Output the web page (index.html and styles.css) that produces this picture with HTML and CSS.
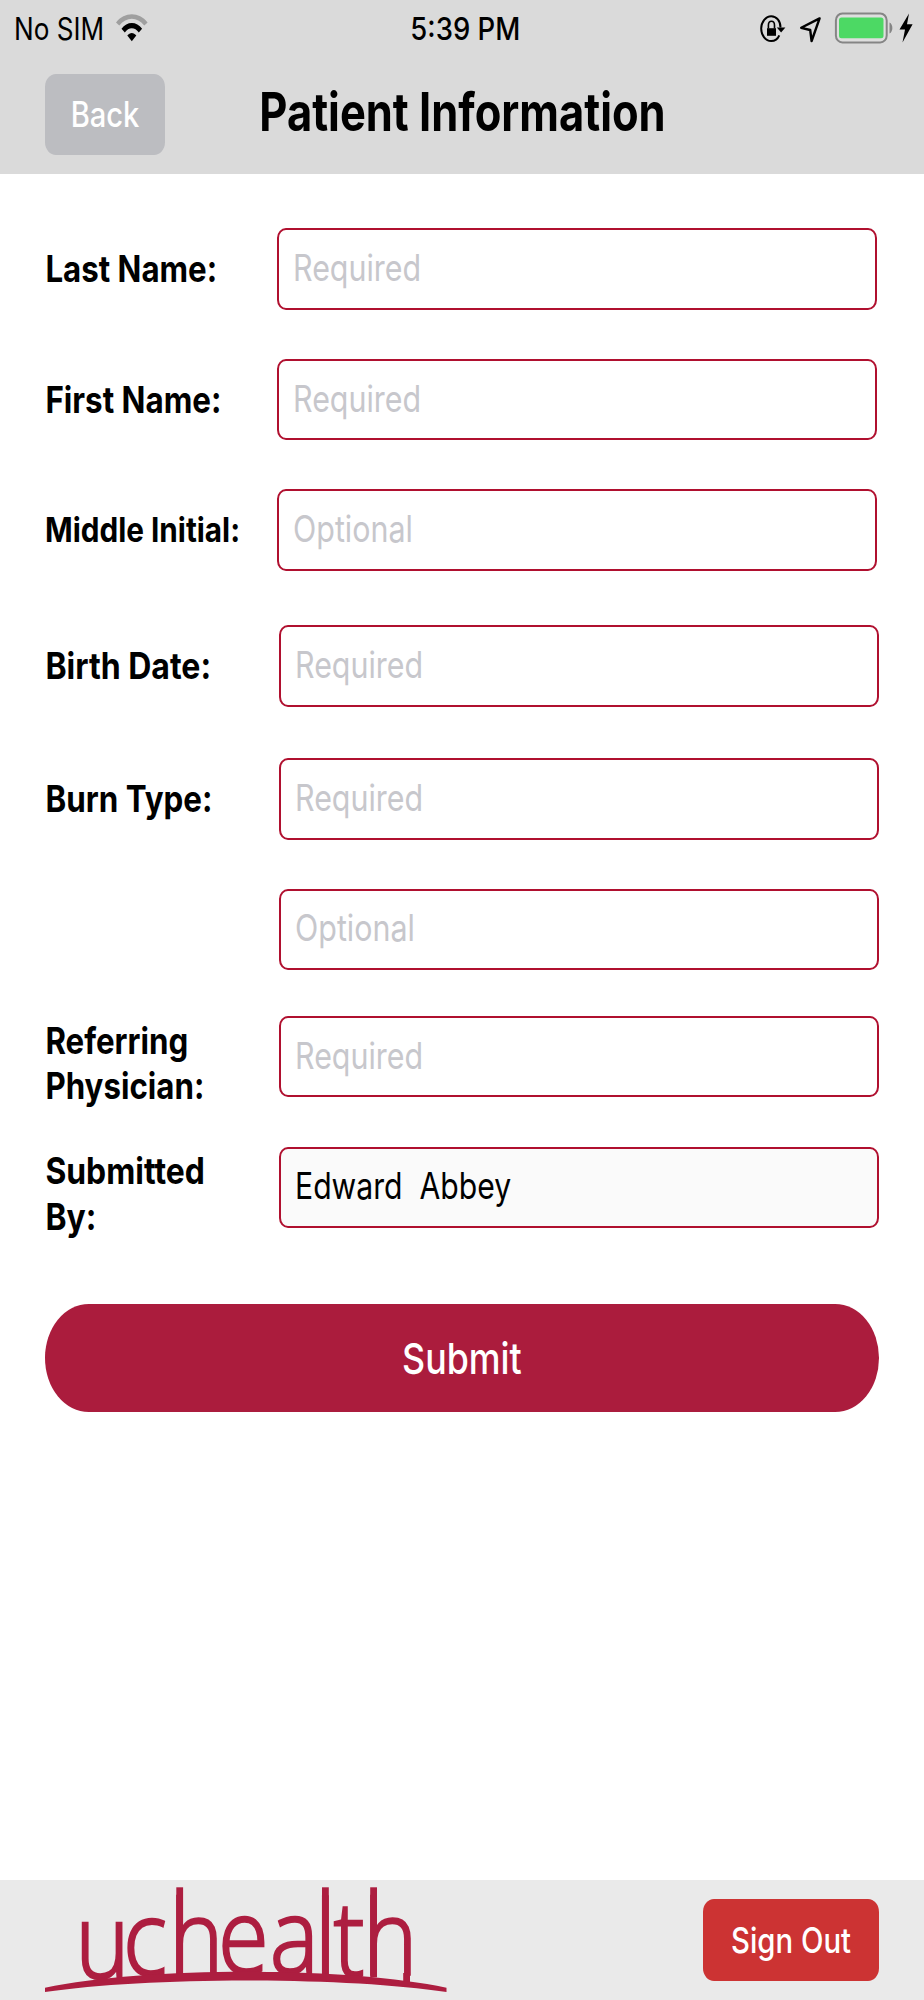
FILE: index.html
```html
<!DOCTYPE html>
<html lang="en">
<head>
<meta charset="utf-8">
<title>Patient Information</title>
<link rel="stylesheet" href="styles.css">
</head>
<body>
<div class="screen">
  <header class="top">
    <div class="status">
      <div class="status-left">
        <span class="carrier">No SIM</span>
        <svg class="wifi" width="32" height="28" viewBox="0 0 32 28">
          <path fill="#9f9f9f" d="M0 8.400C8.600-2.400 23-2.400 31.600 8.400L28.300 11.600C21 2.600 10.600 2.600 3.300 11.600Z"/>
          <path d="M5.500 14.800C11 7 20.600 7 26.100 14.800L22.800 18.500C19 12.700 12.600 12.700 8.800 18.500Z"/>
          <path d="M11.300 21.500C14 18 17.600 18 20.300 21.500L15.800 27.300Z"/>
        </svg>
      </div>
      <span class="time">5:39 PM</span>
      <div class="status-right">
        <svg width="26" height="28" viewBox="0 0 26 28">
          <path d="M20.500 12.500C20.500 6 16.500 1.200 11.200 1.200S1.200 7 1.200 13.600S5.600 26 11.200 26C14.800 26 17.700 24 19.300 20.300" fill="none" stroke="#000" stroke-width="2"/>
          <path d="M16.800 12.500H25.400L21.100 17.600Z"/>
          <path d="M7 13.200H16V20.800H7Z"/>
          <path d="M8.400 13.500V10.200C8.400 4.900 14.500 4.900 14.500 10.200V13.500" fill="none" stroke="#000" stroke-width="1.600"/>
        </svg>
        <svg class="location" width="23" height="28" viewBox="0 0 23 28">
          <path d="M20.600 3.400L2.200 12.800L11.200 15L12.600 26Z" fill="none" stroke="#000" stroke-width="2.400" stroke-linejoin="round"/>
        </svg>
        <svg class="battery" width="59" height="32" viewBox="0 0 59 32">
          <rect x="1.900" y="1.400" width="50.800" height="29" rx="6.500" ry="7" fill="#dedede" stroke="#858585" stroke-width="2"/>
          <rect x="5" y="5.600" width="44.500" height="20.600" rx="2.500" fill="#4cd964"/>
          <path d="M55.500 10.500C59.300 12 59.300 20 55.500 21.500Z" fill="#858585"/>
        </svg>
        <svg class="bolt" width="14" height="32" viewBox="0 0 14 32">
          <path d="M10 1.500L.5 17.600H6L3.500 30.500L13.600 12.200H8Z"/>
        </svg>
      </div>
    </div>
    <div class="titlebar">
      <button class="back"><span>Back</span></button>
      <h1>Patient Information</h1>
    </div>
  </header>

  <main class="form">
    <div class="row"><label class="w-last">Last Name:</label><div class="field"><span>Required</span></div></div>
    <div class="row"><label class="w-first">First Name:</label><div class="field"><span>Required</span></div></div>
    <div class="row"><label class="w-middle">Middle Initial:</label><div class="field"><span>Optional</span></div></div>
    <div class="row inset birth"><label class="w-birth">Birth Date:</label><div class="field"><span>Required</span></div></div>
    <div class="row inset"><label class="w-first">Burn Type:</label><div class="field"><span>Required</span></div></div>
    <div class="row inset"><label></label><div class="field"><span>Optional</span></div></div>
    <div class="row inset referring"><label class="two-line w-last">Referring<br>Physician:</label><div class="field"><span>Required</span></div></div>
    <div class="row inset"><label class="two-line w-submitted">Submitted<br>By:</label><div class="field filled"><span>Edward&nbsp; Abbey</span></div></div>
    <button class="submit"><span>Submit</span></button>
  </main>

  <footer class="bottom">
    <svg class="logo" width="402" height="120" viewBox="45 1880 402 120">
      <g fill="#ad1e40">
        <text class="wordmark" transform="scale(.88 1)" x="85.700 140 192.200 248 306.800 358 379.300 412.700" y="1978 1975 1975 1973.500 1973.500 1975 1976 1975">uchealth</text>
        <rect x="176.300" y="1887.300" width="6.800" height="88"/>
        <rect x="322" y="1887.300" width="6.800" height="88"/>
        <rect x="370.200" y="1887.300" width="6.800" height="90"/>
        <rect x="403.200" y="1973" width="6.800" height="10"/>
        <path d="M45 1987.700C147 1966.500 345 1966.500 446.500 1987.700V1992C345 1976.500 147 1976.500 45 1992Z"/>
      </g>
    </svg>
    <button class="signout"><span>Sign Out</span></button>
  </footer>
</div>
</body>
</html>
```

FILE: styles.css
```css
* { box-sizing: border-box; }
body { margin: 0; background: #fff; }
.screen {
  width: 924px;
  height: 2000px;
  display: flex;
  flex-direction: column;
  font-family: Inter, "Liberation Sans", sans-serif;
  color: #000;
}
button { border: 0; padding: 0; font-family: inherit; display: flex; align-items: center; justify-content: center; }
span, label { white-space: nowrap; }

.top { height: 173.7px; flex: none; background: #dadada; }
.status { height: 57px; display: grid; grid-template-columns: 1fr 124px 1fr; align-items: center; }
.status-left { display: flex; align-items: center; padding-left: 13.8px; }
.carrier { width: 102.200px; font-size: 31px; transform: scaleX(.843); transform-origin: left; }
.wifi { position: relative; top: -1px; }
.time { font-size: 31px; font-weight: 500; transform: translateX(3.300px) scaleX(.887); }
.status-right { display: flex; align-items: center; justify-content: flex-end; padding-right: 11px; }
.location { margin-left: 13px; }
.battery { margin-left: 12px; position: relative; top: -1px; }
.bolt { margin-left: 6px; position: relative; top: -1px; }

.titlebar { position: relative; height: 116.700px; padding: 16.500px 45px 0; }
.back { width: 120px; height: 81.500px; border-radius: 11px / 13px; background: #bcbdc1; color: #fff; font-size: 35px; font-weight: 500; }
.back span { transform: translateX(-.3px) scaleX(.832); }
h1 {
  position: absolute;
  inset: 24.500px 0 auto;
  margin: 0;
  text-align: center;
  font-size: 53px;
  line-height: 60px;
  font-weight: 700;
  transform: translateX(.5px) scaleX(.820);
}

.form { flex: 1; padding: 54.800px 45px 0; }
.row { display: flex; align-items: center; height: 81.300px; margin-bottom: 49.200px; }
.row label { width: 232px; flex: none; font-size: 37px; line-height: 45.500px; font-weight: 700; transform-origin: left; }
.inset label { width: 234px; }
.birth { margin-top: 54.500px; margin-bottom: 51.700px; }
.referring { margin-top: -3.200px; }
.two-line { padding-top: 13px; }
.w-last { transform: translateX(.4px) scaleX(.845); }
.w-first { transform: translateX(.4px) scaleX(.848); }
.row .w-middle { font-size: 34px; transform: scaleX(.874); }
.w-birth { transform: translateX(.4px) scaleX(.865); }
.w-submitted { transform: translateX(.4px) scaleX(.861); }
.field {
  width: 600px;
  height: 81.300px;
  display: flex;
  align-items: center;
  padding: 0 0 3px 13.800px;
  border: 2px solid #b0102f;
  border-radius: 9px / 10px;
  font-size: 37px;
  color: #c7c7cc;
}
.field span { transform: scaleX(.822); transform-origin: left; }
.filled { background: #fafafa; color: #000; }
.field.filled span { transform: scaleX(.815); }

.submit { width: 834px; height: 108.500px; border-radius: 44px / 54.250px; background: #ab1c3d; color: #fff; font-size: 43px; font-weight: 500; }
.row + .submit { margin-top: 76.200px; }
.submit span { transform: scaleX(.832); }

.bottom { height: 120px; flex: none; display: flex; justify-content: space-between; padding: 0 44.700px 0 45px; background: #eaeaea; }
.wordmark { font-family: "Open Sans", sans-serif; font-weight: 300; font-size: 104px; stroke: #ad1e40; stroke-width: 2.600px; }
.signout { width: 176.300px; height: 81.700px; margin-top: 19.300px; border-radius: 11px / 13px; background: #cc3333; color: #fff; font-size: 35px; font-weight: 500; }
.signout span { transform: translateX(-.6px) scaleX(.838); }
```
